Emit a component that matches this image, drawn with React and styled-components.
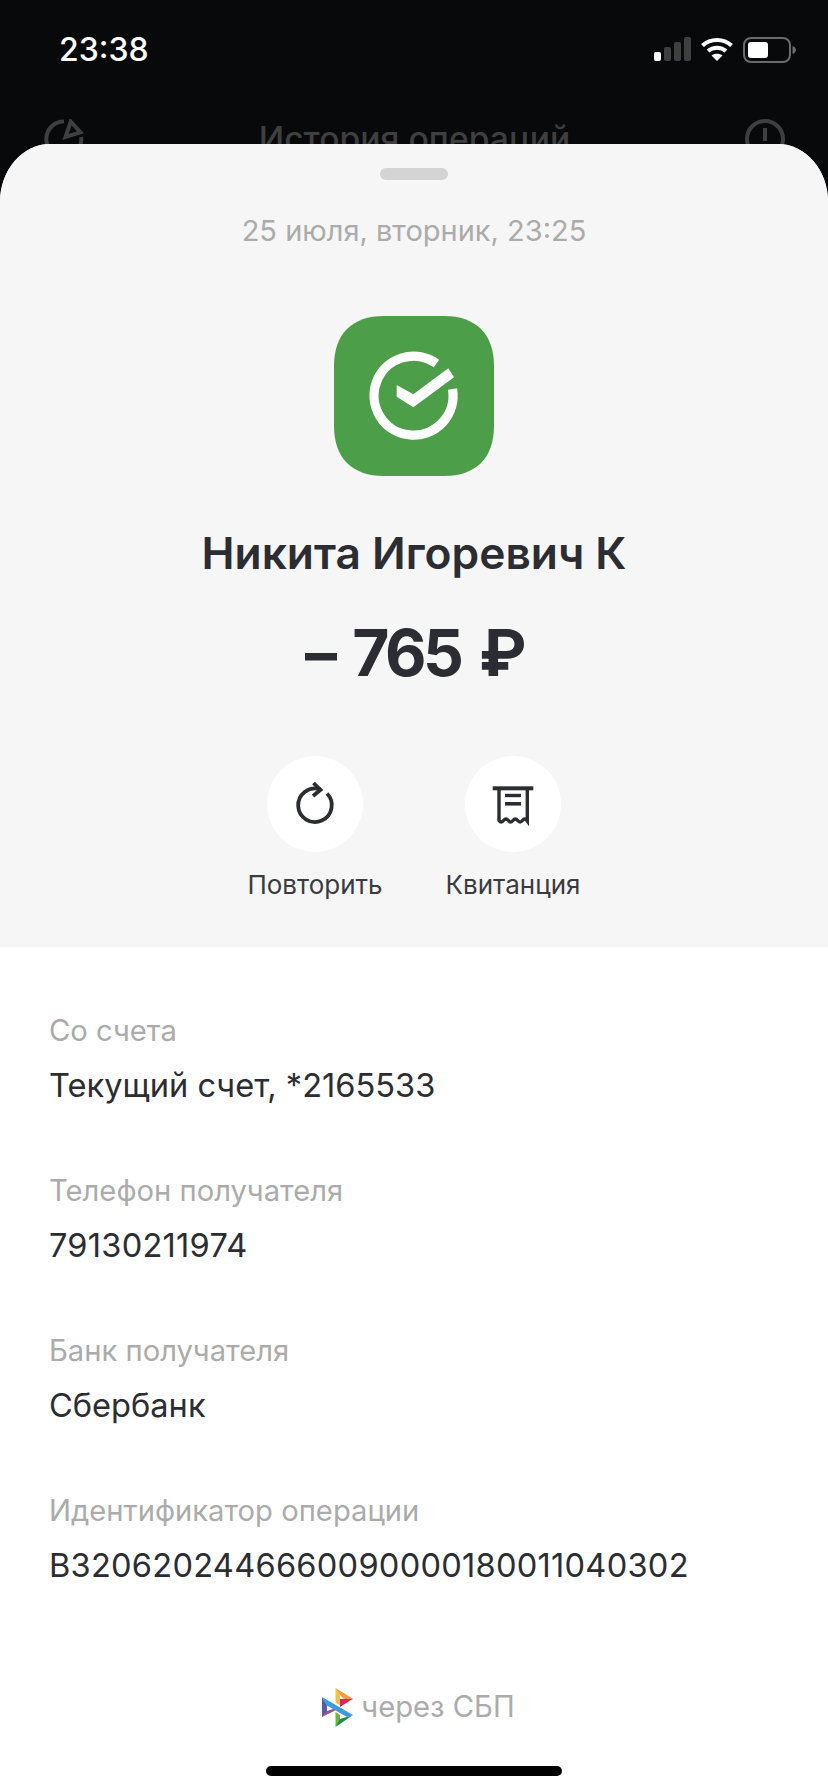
import React from 'react'
import styled, { createGlobalStyle } from 'styled-components'

const GlobalStyle = createGlobalStyle`
  html, body {
    margin: 0;
    padding: 0;
    background: #08090b;
  }
  * { box-sizing: border-box; }
`

const Page = styled.div`
  width: 828px;
  height: 1792px;
  overflow: hidden;
  display: flex;
  flex-direction: column;
  background: #08090b;
  font-family: Inter, "Liberation Sans", sans-serif;
`

const StatusBar = styled.div`
  height: 119px;
  padding: 37px 32px 0 59px;
  display: flex;
  justify-content: space-between;
  align-items: flex-start;
`

const StatusIcons = styled.div`
  display: flex;
  gap: 10px;
`

const Time = styled.div`
  color: #fff;
  font-size: 32px;
  line-height: 26px;
  font-weight: 500;
`

const Nav = styled.div`
  height: 25px;
  padding: 0 43px 0 44px;
  display: flex;
  justify-content: space-between;
  overflow: hidden;
  color: #3f3f40;
`

const NavTitle = styled.div`
  font-size: 33.7px;
  line-height: 40px;
  font-weight: 500;
`

const Sheet = styled.div`
  background: #fff;
  border-radius: 50px 50px 0 0 / 58px 58px 0 0;
  overflow: hidden;
  flex: 1;
  display: flex;
  flex-direction: column;
`

const Summary = styled.div`
  height: 803px;
  background: #f6f6f6;
  display: flex;
  flex-direction: column;
  align-items: center;
  padding-top: 24px;
`

const Handle = styled.div`
  width: 68px;
  height: 12px;
  border-radius: 6px;
  background: #d4d4d4;
`

const DateText = styled.div`
  margin-top: 34px;
  color: #ababab;
  font-size: 29px;
  line-height: 34px;
`

const LogoWrap = styled.div`
  margin-top: 68px;
  width: 160px;
  height: 160px;
`

const Name = styled.div`
  margin-top: 50px;
  color: #2c2d33;
  font-size: 44.3px;
  line-height: 54px;
  font-weight: 600;
`

const Amount = styled.div`
  margin-top: 33px;
  color: #2c2d33;
  font-size: 64px;
  line-height: 80px;
  font-weight: 700;
  letter-spacing: -3.5px;
  word-spacing: 7px;
`

const Actions = styled.div`
  margin-top: 63px;
  display: flex;
  gap: 68px;
`

const Action = styled.div`
  width: 130px;
  display: flex;
  flex-direction: column;
  align-items: center;
  gap: 18px;
`

const RoundButton = styled.div`
  width: 96px;
  height: 96px;
  border-radius: 50%;
  background: #fff;
  display: flex;
  align-items: center;
  justify-content: center;
`

const ActionLabel = styled.div`
  color: #3a3b40;
  font-size: 26px;
  line-height: 30px;
  white-space: nowrap;
`

const Details = styled.div`
  padding: 67px 49px 0;
  display: flex;
  flex-direction: column;
  gap: 70px;
`

const Field = styled.div`
  display: flex;
  flex-direction: column;
  gap: 18px;
`

const FieldLabel = styled.div`
  color: #ababab;
  font-size: 29.2px;
  line-height: 34px;
`

const FieldValue = styled.div`
  color: #2c2d33;
  font-size: 32.6px;
  line-height: 38px;
  letter-spacing: ${(p) => (p.$numeric ? '0.25px' : '0')};
`

const Footer = styled.div`
  margin-top: 103px;
  padding-left: 9px;
  display: flex;
  justify-content: center;
  align-items: center;
  gap: 7px;
  color: #ababab;
  font-size: 29.2px;
  line-height: 40px;
`

const HomeIndicator = styled.div`
  align-self: center;
  margin-top: 39px;
  width: 296px;
  height: 10px;
  border-radius: 5px;
  background: #000;
`

const SignalIcon = () => (
  <svg width="37" height="24" viewBox="0 0 37 24">
    <rect x="0" y="15" width="7" height="9" rx="2" fill="#fff" />
    <rect x="10" y="10" width="7" height="14" rx="2" fill="#3f3f40" />
    <rect x="20" y="5" width="7" height="19" rx="2" fill="#3f3f40" />
    <rect x="30" y="0" width="7" height="24" rx="2" fill="#3f3f40" />
  </svg>
)

const WifiIcon = () => (
  <svg width="32" height="24" viewBox="0 0 32 24" fill="none" stroke="#fff" strokeWidth="4">
    <path d="M1.5 8.5C9.5 1 22.5 1 30.5 8.5" />
    <path d="M7 14C12 9.5 20 9.5 25 14" />
    <path d="M16 24L10.5 18.5C13.5 16 18.5 16 21.5 18.5Z" fill="#fff" stroke="none" />
  </svg>
)

const BatteryIcon = () => (
  <svg width="53" height="26" viewBox="0 0 53 26">
    <rect x="1" y="1" width="46" height="24" rx="7" fill="none" stroke="#6b6b6c" strokeWidth="2" />
    <rect x="5" y="5" width="20" height="16" rx="3" fill="#fff" />
    <path d="M49.5 9C52 10 53 11.5 53 13C53 14.5 52 16 49.5 17Z" fill="#6b6b6c" />
  </svg>
)

const ChartIcon = () => (
  <svg width="40" height="40" viewBox="0 0 40 40" fill="none" stroke="#3f3f40" strokeWidth="4">
    <path d="M20 2.5A17.5 17.5 0 1 0 37.2 18" />
    <path d="M26.7 2.5L36.5 13.3L21.5 18Z" />
  </svg>
)

const InfoIcon = () => (
  <svg width="40" height="40" viewBox="0 0 40 40" fill="none" stroke="#3f3f40" strokeWidth="4">
    <circle cx="20" cy="20" r="18" />
    <path d="M20 9V22" />
  </svg>
)

const SberLogo = () => (
  <svg width="160" height="160" viewBox="0 0 160 160">
    <path
      d="M50 0H110C142 0 160 18 160 50V110C160 142 142 160 110 160H50C18 160 0 142 0 110V50C0 18 18 0 50 0Z"
      fill="#4c9f48"
    />
    <path
      d="M102.5 47.5A39.5 39.5 0 1 0 118.5 73"
      fill="none"
      stroke="#fff"
      strokeWidth="9.3"
    />
    <path d="M62.7 69V80.7L79.3 91.3L120 61.3L114.3 52.3L79.3 78.3Z" fill="#fff" />
  </svg>
)

const RepeatIcon = () => (
  <svg width="48" height="48" viewBox="0 0 48 48" fill="none" stroke="#2c2d33" strokeWidth="3.8">
    <path d="M29 9.2A16.8 16.8 0 1 0 36 13.5" />
    <path d="M22.5 3L29.5 9.8L22 16" />
  </svg>
)

const ReceiptIcon = () => (
  <svg width="48" height="48" viewBox="0 0 48 48" fill="none">
    <rect x="3.7" y="6.3" width="40.6" height="4" fill="#2c2d33" />
    <path
      d="M10 10V40.5C11.5 42.5 13 42.5 14.6 40.5S17.7 38.5 19.3 40.5S22.4 42.5 24 40.5S27.1 38.5 28.7 40.5S31.8 42.5 33.4 40.5S36.5 38.5 38.3 41V10"
      stroke="#2c2d33"
      strokeWidth="3.4"
    />
    <rect x="16" y="13.8" width="16" height="3.4" fill="#2c2d33" />
    <rect x="16" y="22" width="16" height="3.6" fill="#2c2d33" />
  </svg>
)

const SbpLogo = () => (
  <svg width="32" height="39" viewBox="0 0 32 39">
    <path d="M13.5 0L31 10.7L22 11L17 6Z" fill="#f59f3a" />
    <path d="M13.5 0L18 7V17L13.5 15Z" fill="#f2c14e" />
    <path d="M18 11L31 10.7L18 19Z" fill="#e0245e" />
    <path d="M0 9L5 17V24L0 29Z" fill="#5b57a2" />
    <path d="M0 29L5 23L14 20V22Z" fill="#a04a9c" />
    <path d="M13.5 24L18 27V33L13.5 39Z" fill="#6fb63f" />
    <path d="M13.5 39L18 31L31 27Z" fill="#1f8a4c" />
    <path d="M0 9L31 27L25 29L4 17Z" fill="#3d9bdc" />
  </svg>
)

const fields = [
  { label: 'Со счета', value: 'Текущий счет, *2165533' },
  { label: 'Телефон получателя', value: '79130211974', numeric: true },
  { label: 'Банк получателя', value: 'Сбербанк' },
  { label: 'Идентификатор операции', value: 'B3206202446660090000180011040302', numeric: true },
]

export default function App() {
  return (
    <Page>
      <GlobalStyle />
      <StatusBar>
        <Time>23:38</Time>
        <StatusIcons>
          <SignalIcon />
          <WifiIcon />
          <BatteryIcon />
        </StatusIcons>
      </StatusBar>
      <Nav>
        <ChartIcon />
        <NavTitle>История операций</NavTitle>
        <InfoIcon />
      </Nav>
      <Sheet>
        <Summary>
          <Handle />
          <DateText>25 июля, вторник, 23:25</DateText>
          <LogoWrap>
            <SberLogo />
          </LogoWrap>
          <Name>Никита Игоревич К</Name>
          <Amount>– 765 ₽</Amount>
          <Actions>
            <Action>
              <RoundButton>
                <RepeatIcon />
              </RoundButton>
              <ActionLabel>Повторить</ActionLabel>
            </Action>
            <Action>
              <RoundButton>
                <ReceiptIcon />
              </RoundButton>
              <ActionLabel>Квитанция</ActionLabel>
            </Action>
          </Actions>
        </Summary>
        <Details>
          {fields.map((f) => (
            <Field key={f.label}>
              <FieldLabel>{f.label}</FieldLabel>
              <FieldValue $numeric={f.numeric}>{f.value}</FieldValue>
            </Field>
          ))}
        </Details>
        <Footer>
          <SbpLogo />
          через СБП
        </Footer>
        <HomeIndicator />
      </Sheet>
    </Page>
  )
}
